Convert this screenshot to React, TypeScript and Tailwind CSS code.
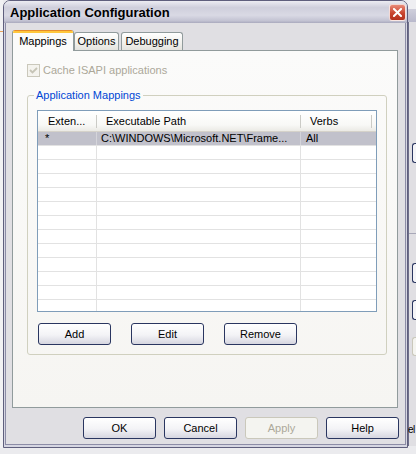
const ui = "font-['Liberation_Sans',Arial,sans-serif] text-[11px] leading-[13px]";

type Mapping = { ext: string; path: string; verbs: string };

const mappings: Mapping[] = [
  { ext: "*", path: "C:\\WINDOWS\\Microsoft.NET\\Frame...", verbs: "All" },
];

function XpButton({ label, disabled = false }: { label: string; disabled?: boolean }) {
  return (
    <button
      disabled={disabled}
      className={`w-[73px] h-[22px] rounded-[3px] border flex items-center justify-center ${
        disabled
          ? "border-[#cac8bb] bg-[#f4f4f0] text-[#aca899]"
          : "border-[#2a3660] bg-[linear-gradient(to_bottom,#ffffff_0%,#f3f3f6_55%,#d6d6e0_100%)] text-black"
      }`}
    >
      {label}
    </button>
  );
}

function Tab({ label, active = false, width }: { label: string; active?: boolean; width: string }) {
  if (active) {
    return (
      <div
        className={`${width} h-[21px] -mb-px relative z-10 flex flex-col rounded-t-[3px] border-x border-[#919b9c] bg-[#fbfbfa] overflow-hidden`}
      >
        <div className="h-px bg-[#e68b2c]" />
        <div className="h-[2px] bg-[#ffc73c]" />
        <div className="flex-1 flex items-center justify-center pb-[2px]">{label}</div>
      </div>
    );
  }
  return (
    <div
      className={`${width} h-[18px] flex items-center justify-center rounded-t-[3px] border-x border-t border-[#919b9c] bg-[linear-gradient(to_bottom,#ffffff,#f1f0ec_60%,#e4e3de)]`}
    >
      {label}
    </div>
  );
}

function MappingList() {
  const blank = 12;
  return (
    <div className="h-[202px] border border-[#7f9db9] bg-white overflow-hidden">
      {/* column header */}
      <div className="flex h-[21px] items-center bg-[linear-gradient(to_bottom,#ffffff,#f8f8f6_70%,#ebeae5)] border-b border-[#d5d2ca]">
        <div className="w-[58px] pl-[10px]">Exten...</div>
        <div className="w-px h-[13px] bg-[#cbcbc6]" />
        <div className="w-[203px] pl-[9px]">Executable Path</div>
        <div className="w-px h-[13px] bg-[#cbcbc6]" />
        <div className="w-[70px] pl-[9px]">Verbs</div>
        <div className="w-px h-[13px] bg-[#cbcbc6]" />
      </div>
      {mappings.map((m) => (
        <div key={m.ext} className="flex h-[14px] items-center bg-[#c1c1cb] border-b border-[#e2e2e2]">
          <div className="w-[59px] h-full pl-[7px] border-r border-[#d4d4da]">{m.ext}</div>
          <div className="w-[204px] h-full pl-[4px] border-r border-[#d4d4da] whitespace-nowrap overflow-hidden">
            {m.path}
          </div>
          <div className="flex-1 h-full pl-[5px]">{m.verbs}</div>
        </div>
      ))}
      {Array.from({ length: blank }, (_, i) => (
        <div key={i} className="flex h-[14px] border-b border-[#e2e2e2]">
          <div className="w-[59px] h-full border-r border-[#e2e2e2]" />
          <div className="w-[204px] h-full border-r border-[#e2e2e2]" />
          <div className="flex-1" />
        </div>
      ))}
    </div>
  );
}

function ConfigDialog() {
  return (
    <div className={`absolute left-[3px] top-0 w-[405px] flex flex-col border border-[#5f5f7d] rounded-t-[7px] bg-[#e0dfe3] overflow-hidden ${ui} text-black`}>
      {/* title bar */}
      <div className="h-[22px] flex items-center pl-[6px] pr-[1px] bg-[linear-gradient(to_bottom,#ececf2_0%,#cfcfdc_30%,#d9d9e4_65%,#c2c2d2_90%,#a9a9bd_100%)]">
        <span className="flex-1 pt-[2px] font-bold text-[13px] leading-[16px]">Application Configuration</span>
        <div className="w-[17px] h-[17px] rounded-[3px] border border-white/80 bg-[linear-gradient(to_bottom,#e88a78,#c8442e_55%,#b3301d)] flex items-center justify-center">
          <svg width="9" height="9" viewBox="0 0 9 9">
            <path d="M1 1l7 7M8 1L1 8" stroke="white" strokeWidth="2" strokeLinecap="square" />
          </svg>
        </div>
      </div>

      {/* window frame around the client area */}
      <div className="px-px pb-[2px] bg-[#d6d6e2]">
        <div className="border-x border-b border-[#8c8ca6] bg-[#e0dfe3] pt-[7px] pl-[6px] pr-[6px] pb-[5px] flex flex-col">
          {/* tabs */}
          <div className="flex items-end h-[20px]">
            <Tab label="Mappings" active width="w-[62px]" />
            <Tab label="Options" width="w-[45px]" />
            <div className="w-[2px]" />
            <Tab label="Debugging" width="w-[62px]" />
          </div>

          {/* tab page */}
          <div className="mr-px h-[358px] border border-[#919b9c] bg-[linear-gradient(to_bottom,#fbfbfa,#f6f5f2)] pl-[14px] pt-[13px]">
            <div className="flex items-center h-[13px]">
              <div className="w-[13px] h-[13px] border border-[#cac8bb] bg-[#f4f3ee] flex items-center justify-center">
                <svg width="9" height="9" viewBox="0 0 9 9">
                  <path d="M1 4l2.5 2.5L8 2" stroke="#c6c4b6" strokeWidth="1.8" fill="none" />
                </svg>
              </div>
              <span className="ml-[3px] text-[#aca899]">Cache ISAPI applications</span>
            </div>

            <fieldset className="mt-[12px] w-[360px] border border-[#d0d0bf] rounded-[3px] px-[9px] pb-[9px]">
              <legend className="ml-[-3px] px-[2px] text-[#0046d5]">Application Mappings</legend>
              <div className="mt-[8px]">
                <MappingList />
              </div>
              <div className="mt-[11px] pl-px flex gap-[20px]">
                <XpButton label="Add" />
                <XpButton label="Edit" />
                <XpButton label="Remove" />
              </div>
            </fieldset>
          </div>

          {/* dialog buttons */}
          <div className="mt-[9px] flex justify-end gap-[8px]">
            <XpButton label="OK" />
            <XpButton label="Cancel" />
            <XpButton label="Apply" disabled />
            <XpButton label="Help" />
          </div>
        </div>
      </div>
    </div>
  );
}

function BackWindow() {
  const edge = "h-[20px] w-[16px] rounded-l-[3px] border border-r-0 border-[#2a3660] bg-[#f4f4f7]";
  return (
    <div className={`absolute left-[408px] top-0 w-[8px] h-[446px] flex flex-col overflow-hidden ${ui}`}>
      <div className="h-[9px] bg-[#eeeef2]" />
      <div className="h-[13px] bg-[linear-gradient(to_bottom,#cfcfdc,#b9b9cc)]" />
      <div className="flex-1 flex flex-col border-l border-[#6e6e8a] bg-[#e0dfe3] pl-[3px]">
        <div className="h-[121px]" />
        <div className={edge} />
        <div className="h-[70px]" />
        <div className="h-px -ml-[3px] bg-[#a8a8b8]" />
        <div className="h-[29px]" />
        <div className={edge} />
        <div className="h-[17px]" />
        <div className={edge} />
        <div className="h-[17px]" />
        <div className="h-[19px] w-[16px] rounded-l-[3px] border border-r-0 border-[#cac8bb] bg-[#f4f4f0]" />
        <div className="h-[62px]" />
        <div className="h-[22px] -ml-[3px] flex items-center">
          <span className="-ml-[1px] text-[10px] tracking-[-0.5px]">el</span>
        </div>
      </div>
    </div>
  );
}

export default function App() {
  return (
    <div className="relative w-[416px] h-[454px] overflow-hidden bg-[#ebebee]">
      {/* window edge peeking out on the left */}
      <div className="absolute left-0 top-0 w-[3px] h-[448px] flex flex-col bg-[#f1f1f3]">
        <div className="h-[31px]" />
        <div className="h-px bg-[#e8a25a]" />
      </div>
      <BackWindow />
      <ConfigDialog />
    </div>
  );
}
